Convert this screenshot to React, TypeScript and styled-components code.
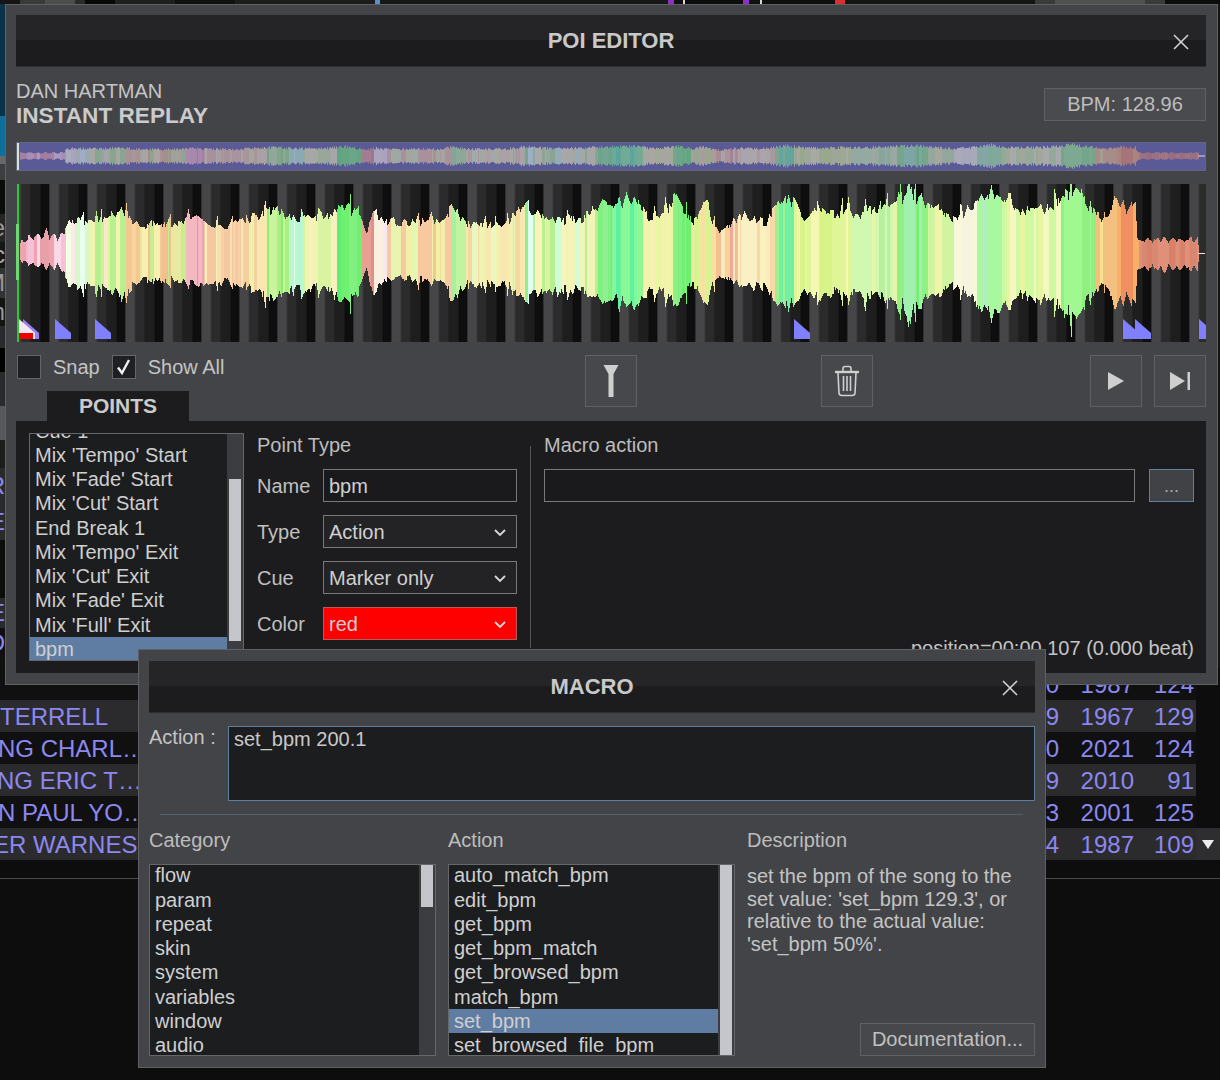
import React from "react";
import styled, { createGlobalStyle } from "styled-components";

const GlobalStyle = createGlobalStyle`
  html, body { margin: 0; padding: 0; background: #0d0d0d; }
  body { font-family: "Liberation Sans", Arial, sans-serif; }
  * { box-sizing: border-box; }
`;

/* ---------- waveform data ---------- */
const ENVELOPE: [number, number, number][] = [
  [18, 4, 4], [22, 16, 12], [34, 22, 16], [50, 22, 16], [60, 18, 17], [70, 38, 38], [85, 36, 38], [100, 38, 38], [124, 47, 47],
  [134, 32, 32], [180, 33, 31], [192, 42, 32], [210, 30, 34], [233, 32, 32], [272, 49, 50], [303, 38, 39], [325, 40, 38],
  [346, 57, 58], [360, 38, 32], [366, 23, 17], [373, 44, 42], [389, 35, 29], [443, 35, 30], [451, 53, 53], [467, 32, 35],
  [505, 32, 35], [525, 56, 53], [545, 38, 42], [583, 38, 42], [599, 53, 53], [612, 55, 53], [633, 63, 63], [649, 38, 42],
  [662, 44, 44], [676, 61, 60], [692, 35, 35], [703, 53, 53], [719, 21, 24], [738, 42, 35], [766, 35, 39], [785, 66, 65],
  [805, 42, 45], [843, 48, 45], [860, 46, 48], [885, 52, 48], [910, 66, 66], [925, 58, 52], [952, 38, 35], [975, 52, 52],
  [991, 71, 73], [1005, 52, 52], [1022, 48, 49], [1050, 52, 52], [1073, 71, 73], [1090, 54, 52], [1104, 35, 32], [1116, 53, 53],
  [1135, 53, 53], [1137, 17, 20], [1197, 16, 18], [1199, 1, 1],
];

const REGIONS: [number, string[]][] = [
  [65, ["#eea4ac", "#f6c0d8", "#fbd8e8", "#e8a0a8", "#f4b8c8"]],
  [85, ["#fbe8f0", "#e8fff0", "#d8f8c8", "#f4ffe0"]],
  [125, ["#c8f4a0", "#dff49c", "#f0f4b0", "#b8f090", "#fae8c8"]],
  [182, ["#f8d4a0", "#f4c890", "#f8f0b0", "#e8e8a0", "#f0c090", "#c8ec90"]],
  [202, ["#f0a0c0", "#e890a8", "#f8c8d8", "#f4b8c0"]],
  [240, ["#f8d0a8", "#f8e0b0", "#f4c8a0", "#f8f0b8"]],
  [262, ["#f8e8b0", "#f0f0a8", "#f4d0a0"]],
  [285, ["#a8f080", "#90ec70", "#c8f4a0"]],
  [300, ["#d8fff8", "#e8fff0", "#b8f8d0"]],
  [335, ["#f0f4b0", "#f8f0c0", "#d8f4a0"]],
  [358, ["#70f070", "#60ee70", "#80f080"]],
  [372, ["#e09088", "#e8a090"]],
  [385, ["#f8e8f0", "#f8d8e0", "#fbf0e0"]],
  [445, ["#f0f0a8", "#f4d8a0", "#e8f4b0", "#f8c8a0", "#e0f8b0", "#f4c890"]],
  [465, ["#a8f0a0", "#b0f4a8", "#c0f4a0"]],
  [520, ["#f0f4b0", "#f8e8b0", "#f4d8a0", "#e8f8c0"]],
  [535, ["#90f090", "#b8f4a8", "#e0fff0"]],
  [595, ["#d0fcd8", "#f0f4b8", "#b8f090", "#d8f4a0", "#f8f4b8"]],
  [610, ["#80f080", "#90f090"]],
  [640, ["#80f8a0", "#60f0a0", "#90f890"]],
  [670, ["#e8f8a0", "#f0f4a8", "#f8f0b0"]],
  [688, ["#70f070", "#80f080", "#90f088"]],
  [712, ["#f4e8a0", "#f8e0a0", "#d8f490"]],
  [735, ["#f0a898", "#f4c090", "#f8d098", "#f8e8c0"]],
  [770, ["#f8ecb8", "#f8f0c8", "#f8d8a8", "#fbf0c0"]],
  [790, ["#a0f090", "#70f0a0", "#c0f4a0"]],
  [850, ["#e0f498", "#f0f4a8", "#d8f488", "#f4f8b0"]],
  [893, ["#e8f4a8", "#b8f0a0", "#d0f8b0"]],
  [925, ["#90f080", "#70f070", "#a0f0b0"]],
  [950, ["#d0f4a0", "#f0f4a8"]],
  [975, ["#f8f8d8", "#f4f4e0"]],
  [1000, ["#90f890", "#a8f8a0", "#b0f0b8"]],
  [1060, ["#e8f4a0", "#f4f8c0", "#d0f8a0"]],
  [1095, ["#90f080", "#a0f890"]],
  [1115, ["#f4c080", "#f8e090"]],
  [1137, ["#f89058", "#f8b068", "#f09060"]],
  [1198, ["#d8806a", "#e09078", "#d88870"]],
];

const hash = (n: number) => {
  const s = Math.sin(n * 127.1 + 11.7) * 43758.5453;
  return s - Math.floor(s);
};

const envelopeAt = (x: number): [number, number] => {
  for (let i = 1; i < ENVELOPE.length; i++) {
    const [x1, t1, b1] = ENVELOPE[i];
    if (x <= x1) {
      const [x0, t0, b0] = ENVELOPE[i - 1];
      const f = (x - x0) / (x1 - x0);
      return [t0 + (t1 - t0) * f, b0 + (b1 - b0) * f];
    }
  }
  return [0, 0];
};

const regionAt = (x: number) => REGIONS.find((r) => x <= r[0]) ?? REGIONS[REGIONS.length - 1];

/* fine jagged outline: short random segments, with a thin tall spike now and then */
const jagged = (seed: number, from: number, to: number) => {
  const out: number[] = new Array(to + 8).fill(1);
  let x = from;
  let v = 0.9;
  let step = 0;
  while (x < to) {
    const w = 1 + Math.floor(hash(seed + step) * 3);
    const r = hash(seed + step + 400);
    const next = r > 0.92 ? 1.24 : 0.72 + r * 0.34;
    for (let i = 0; i < w; i++) out[x + i] = v + (next - v) * (i / w);
    v = next;
    x += w;
    step++;
  }
  return out;
};

const NOISE_SHARED = jagged(1, 18, 1199);
const NOISE_TOP = jagged(2000, 18, 1199);
const NOISE_BOTTOM = jagged(4000, 18, 1199);

type WaveColumn = { x: number; top: number; bottom: number; colour: string; mini: number };

const COLUMNS: WaveColumn[] = [];
{
  let x = 20;
  let band = 0;
  while (x < 1199) {
    const width = 1 + Math.floor(hash(band + 77) * 6);
    const palette = regionAt(x)[1];
    const colour = palette[Math.floor(hash(band + 900) * palette.length)];
    for (let i = 0; i < width && x < 1199; i++, x++) {
      const [t, b] = envelopeAt(x);
      const quiet = x < 65 || x > 1137;
      const bead = quiet ? Math.abs(Math.sin(x / 2.6)) * 0.3 + 0.7 : 1;
      const ft = NOISE_SHARED[x] * 0.75 + NOISE_TOP[x] * 0.25;
      const fb = NOISE_SHARED[x] * 0.75 + NOISE_BOTTOM[x] * 0.25;
      const baseMini = quiet ? 3.8 * bead : 3.5 + Math.max(t, b) * 0.11;
      COLUMNS.push({
        x: x - 16,
        top: Math.round(t * ft * bead),
        bottom: Math.round(b * fb * bead),
        colour,
        mini: baseMini * (0.78 + 0.34 * hash(x + 300)),
      });
    }
    band++;
  }
}

/* ---------- page ---------- */
const Page = styled.div`
  position: relative;
  width: 1220px;
  height: 1080px;
  overflow: hidden;
  background: #0d0d0d;
`;

const TopStrip = styled.div`
  display: flex;
  height: 4px;
  background: #141414;
`;

const TopBit = styled.div<{ $w: number; $c: string }>`
  width: ${(p) => p.$w}px;
  background: ${(p) => p.$c};
  flex: none;
`;

const EdgeArea = styled.div`
  display: flex;
  justify-content: space-between;
  height: 664px;
`;

const EdgeColumn = styled.div<{ $w: number }>`
  display: flex;
  flex-direction: column;
  width: ${(p) => p.$w}px;
  overflow: hidden;
`;

const EdgeBit = styled.div<{ $h: number; $c: string; $ink?: string }>`
  display: flex;
  flex: none;
  justify-content: flex-end;
  align-items: center;
  height: ${(p) => p.$h}px;
  background: ${(p) => p.$c};
  color: ${(p) => p.$ink ?? "#8c88f0"};
  font-size: 24px;
  line-height: 1;
  overflow: hidden;
  span { flex: none; }
`;

const Table = styled.div`
  display: flex;
  flex-direction: column;
  width: 1196px;
`;

const Row = styled.div<{ $alt?: boolean }>`
  display: grid;
  grid-template-columns: 1fr 59px 75px 60px;
  height: 32px;
  padding-right: 2px;
  background: ${(p) => (p.$alt ? "#2b2b2d" : "#101011")};
  color: #8c88f0;
  font-size: 24px;
  line-height: 34px;
`;

const NameCell = styled.div`
  white-space: nowrap;
  overflow: hidden;
`;

const NameText = styled.div<{ $shift: number }>`
  margin-left: ${(p) => p.$shift}px;
`;

const NumCell = styled.div`
  text-align: right;
`;

const ScrollArrow = styled.div`
  position: absolute;
  left: 1196px;
  top: 828px;
  width: 24px;
  height: 32px;
  display: flex;
  align-items: center;
  justify-content: center;
  background: #2e2e30;
`;

const FootLine = styled.div`
  margin-top: 18px;
  height: 1px;
  background: #4a4a4c;
`;

/* ---------- windows ---------- */
const WindowFrame = styled.div<{ $x: number; $y: number; $w: number; $h: number; $pad: string }>`
  position: absolute;
  left: ${(p) => p.$x}px;
  top: ${(p) => p.$y}px;
  width: ${(p) => p.$w}px;
  height: ${(p) => p.$h}px;
  padding: ${(p) => p.$pad};
  display: flex;
  flex-direction: column;
  background: #434448;
  border: 1px solid #606165;
  color: #c6c6c6;
  font-size: 20px;
`;

const TitleBar = styled.div`
  position: relative;
  flex: none;
  height: 52px;
  display: flex;
  align-items: center;
  justify-content: center;
  background: linear-gradient(#252527 50%, #1c1c1e 50%);
  border-bottom: 1px solid #2e2e31;
  font-size: 22px;
  font-weight: 700;
  color: #c9c9c9;
`;

const CloseIcon = styled.svg`
  position: absolute;
  right: 17px;
  top: 19px;
  width: 16px;
  height: 16px;
  stroke: #d2d2d2;
  stroke-width: 1.6;
`;

const InfoRow = styled.div`
  display: flex;
  justify-content: space-between;
  margin-top: 12px;
  height: 51px;
`;

const Track = styled.div`
  display: flex;
  flex-direction: column;
`;

const Artist = styled.div`
  font-size: 20px;
  line-height: 24px;
  color: #c4c4c4;
`;

const Song = styled.div`
  font-size: 22.6px;
  line-height: 26px;
  font-weight: 700;
  color: #cbcbcb;
`;

const BpmBox = styled.div`
  width: 162px;
  height: 33px;
  margin-top: 9px;
  display: flex;
  align-items: center;
  justify-content: center;
  background: #4a4b4f;
  border: 1px solid #5f6064;
  font-size: 20px;
  color: #bdbdbd;
`;

const MiniWave = styled.svg`
  display: block;
  flex: none;
  margin-top: 12px;
  width: 1190px;
  height: 29px;
  background: #5a5a96;
  border: 1px solid #65657f;
`;

const MainWave = styled.svg`
  display: block;
  flex: none;
  margin-top: 13px;
  width: 1190px;
  height: 158px;
`;

const Toolbar = styled.div`
  display: flex;
  flex: none;
  margin-top: 13px;
  height: 66px;
  align-items: flex-start;
`;

const ToolLeft = styled.div`
  display: flex;
  flex-direction: column;
  width: 569px;
  height: 66px;
`;

const CheckRow = styled.div`
  display: flex;
  align-items: center;
  gap: 12px;
  height: 24px;
  padding-left: 1px;
  font-size: 20px;
  color: #c4c4c4;
`;

const CheckBox = styled.div`
  width: 24px;
  height: 24px;
  display: flex;
  align-items: center;
  justify-content: center;
  background: #1f2023;
  border: 1px solid #64656a;
`;

const Tab = styled.div`
  margin: 12px 0 0 31px;
  width: 142px;
  height: 30px;
  display: flex;
  align-items: center;
  justify-content: center;
  background: #1c1c1e;
  font-size: 21px;
  font-weight: 700;
  color: #cbcbcb;
`;

const ToolButton = styled.div<{ $gap?: number }>`
  width: 52px;
  height: 52px;
  display: flex;
  align-items: center;
  justify-content: center;
  margin-left: ${(p) => p.$gap ?? 0}px;
  background: #47484c;
  border: 1px solid #606165;
`;

const ToolSpacer = styled.div`
  flex: 1;
`;

const Panel = styled.div`
  flex: none;
  height: 252px;
  display: flex;
  padding: 12px 12px 12px 13px;
  background: #1c1c1e;
  overflow: hidden;
`;

const ListBox = styled.div<{ $w: number; $h: number }>`
  position: relative;
  flex: none;
  width: ${(p) => p.$w}px;
  height: ${(p) => p.$h}px;
  background: #1c1d1f;
  border: 1px solid #66676b;
  overflow: hidden;
`;

const ListRows = styled.div<{ $offset: number }>`
  margin-top: ${(p) => p.$offset}px;
  padding-right: 16px;
`;

const ListRow = styled.div<{ $on?: boolean }>`
  height: 24.25px;
  line-height: 24.25px;
  padding-left: 5px;
  font-size: 20px;
  white-space: nowrap;
  color: #cfcfcf;
  background: ${(p) => (p.$on ? "#5f7ca3" : "transparent")};
`;

const ScrollTrack = styled.div`
  position: absolute;
  right: 0;
  top: 0;
  bottom: 0;
  width: 16px;
  background: #3c3d40;
`;

const ScrollThumb = styled.div<{ $top: number; $h: number }>`
  position: absolute;
  left: 2px;
  right: 2px;
  top: ${(p) => p.$top}px;
  height: ${(p) => p.$h}px;
  background: #c5c6cc;
`;

const FormColumn = styled.div`
  flex: none;
  width: 260px;
  margin-left: 13px;
  display: flex;
  flex-direction: column;
  gap: 13px;
  color: #c0c0c0;
`;

const Heading = styled.div`
  flex: none;
  height: 24px;
  line-height: 24px;
  font-size: 20px;
  color: #bdbdbd;
`;

const FormHeading = styled(Heading)`
  margin-bottom: -1px;
`;

const FormRow = styled.div`
  display: flex;
  align-items: center;
  justify-content: space-between;
  height: 33px;
`;

const FieldLabel = styled.span`
  padding-top: 2px;
`;

const Field = styled.div<{ $bg?: string; $line?: string; $w?: number }>`
  position: relative;
  flex: none;
  width: ${(p) => (p.$w ? `${p.$w}px` : "194px")};
  height: 33px;
  display: flex;
  align-items: center;
  justify-content: space-between;
  padding: 2px 10px 0 5px;
  background: ${(p) => p.$bg ?? "#1a1a1c"};
  border: 1px solid ${(p) => p.$line ?? "#77787c"};
  color: #d0d0d0;
  font-size: 20px;
`;

const Rule = styled.div`
  flex: none;
  align-self: flex-start;
  width: 1px;
  height: 202px;
  margin: 13px 13px 0 13px;
  background: #55565a;
`;

const MacroColumn = styled.div`
  flex: 1;
  display: flex;
  flex-direction: column;
`;

const MacroHeading = styled(Heading)`
  margin-bottom: 12px;
`;

const MacroInputs = styled.div`
  display: flex;
  justify-content: space-between;
`;

const DotsButton = styled.div`
  width: 45px;
  height: 33px;
  display: flex;
  align-items: flex-end;
  justify-content: center;
  padding-bottom: 4px;
  background: #404246;
  border: 1px solid #5f7fa8;
  color: #aaa;
  font-size: 18px;
  line-height: 22px;
`;

const PositionText = styled.div`
  margin-top: auto;
  text-align: right;
  font-size: 20px;
  line-height: 26px;
  color: #c4c4c4;
`;

/* ---------- macro window ---------- */
const ActionRow = styled.div`
  display: flex;
  justify-content: space-between;
  margin-top: 13px;
`;

const ActionLabel = styled.div`
  height: 24px;
  line-height: 22px;
  color: #c4c4c4;
`;

const ActionArea = styled.div`
  width: 807px;
  height: 75px;
  padding: 0 5px;
  line-height: 24px;
  background: #1c1d1f;
  border: 1px solid #5c7d9f;
  color: #c8c8c8;
`;

const Separator = styled.div`
  height: 1px;
  margin: 13px 12px 0 11px;
  background: #555e68;
`;

const Columns = styled.div`
  display: grid;
  grid-template-columns: 287px 287px 288px;
  column-gap: 12px;
  margin-top: 13px;
`;

const Col = styled.div`
  display: flex;
  flex-direction: column;
  gap: 12px;
  height: 228px;
`;

const DescText = styled.div`
  margin-top: 1px;
  font-size: 20px;
  line-height: 22.6px;
  color: #c4c4c4;
`;

const DocButton = styled.div`
  align-self: flex-end;
  margin-top: auto;
  width: 175px;
  height: 33px;
  display: flex;
  align-items: center;
  justify-content: center;
  background: #47484c;
  border: 1px solid #606165;
  color: #c0c0c0;
`;

/* ---------- pieces ---------- */
const Chevron = () => (
  <svg width="12" height="8" viewBox="0 0 12 8" fill="none" stroke="#d8d8d8" strokeWidth="1.8">
    <polyline points="1,1 6,6 11,1" />
  </svg>
);

const Close = () => (
  <CloseIcon viewBox="0 0 16 16" fill="none">
    <line x1="1" y1="1" x2="15" y2="15" />
    <line x1="15" y1="1" x2="1" y2="15" />
  </CloseIcon>
);

const MiniWaveform = () => (
  <MiniWave viewBox="1 1 1188 27" preserveAspectRatio="none">
    <rect x="1" y="1" width="2" height="27" fill="#d0e8d0" />
    <g opacity="0.5">
      {COLUMNS.map((c) => (
        <rect key={c.x} x={c.x} y={14 - c.mini} width="1" height={c.mini * 2} fill={c.colour} />
      ))}
    </g>
    <rect x="1182" y="13.5" width="7" height="1" fill="#d8d8e8" />
  </MiniWave>
);

const Marker = ({ x }: { x: number }) => (
  <polygon points={`${x},135 ${x + 16},149 ${x + 16},155 ${x},155`} fill="#8080ff" />
);

const MainWaveform = () => (
  <MainWave viewBox="0 0 1190 158">
    <defs>
      <pattern id="beats" x="-4.6" y="0" width="38" height="158" patternUnits="userSpaceOnUse">
        <rect x="0" width="9.5" height="158" fill="#464648" />
        <rect x="9.5" width="9.5" height="158" fill="#2b2b2b" />
        <rect x="19" width="9.5" height="158" fill="#1e1e1e" />
        <rect x="28.5" width="9.5" height="158" fill="#0e0e0e" />
      </pattern>
    </defs>
    <rect x="2" width="1188" height="158" fill="url(#beats)" />
    {COLUMNS.map((c) => (
      <rect key={c.x} x={c.x} y={69 - c.top} width="1" height={c.top + c.bottom} fill={c.colour} />
    ))}
    <rect x="1182" y="69" width="7" height="1" fill="#f0e8e0" />
    <rect x="1" y="0" width="2" height="158" fill="#30c830" />
    <rect x="0" y="40" width="3" height="56" fill="#70d870" />
    <polygon points="7,135 23,149 23,155 7,155" fill="#9a80f0" />
    <polygon points="3,135 19,149 19,155 3,155" fill="#f8e8f0" />
    <rect x="3" y="149" width="14" height="6" fill="#ee0000" />
    <Marker x={39} />
    <Marker x={79} />
    <Marker x={778} />
    <Marker x={1107} />
    <Marker x={1119} />
    <Marker x={1183} />
  </MainWave>
);

const Check = () => (
  <svg width="18" height="18" viewBox="0 0 18 18" fill="none" stroke="#f0f0f0" strokeWidth="2.4">
    <polyline points="3,9.5 7,15 14,2" />
  </svg>
);

const PinIcon = () => (
  <svg width="16" height="33" viewBox="0 0 16 33" fill="#cfcfcf">
    <polygon points="0.5,0 15.5,0 10.5,9 10.5,32 5.5,32 5.5,9" />
  </svg>
);

const TrashIcon = () => (
  <svg width="26" height="32" viewBox="0 0 26 32" fill="none" stroke="#cfcfcf" strokeWidth="1.6">
    <path d="M1 7 H25" strokeWidth="2.4" />
    <path d="M9 6 V3.5 Q9 1.5 11 1.5 H15 Q17 1.5 17 3.5 V6" />
    <path d="M4 8 L5 28 Q5.2 30.5 8 30.5 H18 Q20.8 30.5 21 28 L22 8" />
    <path d="M9.5 11 V26 M13 11 V26 M16.5 11 V26" />
  </svg>
);

const PlayIcon = () => (
  <svg width="16" height="18" viewBox="0 0 16 18" fill="#cfcfcf">
    <polygon points="0,0 16,9 0,18" />
  </svg>
);

const NextIcon = () => (
  <svg width="21" height="18" viewBox="0 0 21 18" fill="#cfcfcf">
    <polygon points="0,0 15,9 0,18" />
    <rect x="17.5" y="0" width="2.5" height="18" />
  </svg>
);

const DownArrow = () => (
  <svg width="12" height="9" viewBox="0 0 12 9" fill="#ececec">
    <polygon points="0,0 12,0 6,9" />
  </svg>
);

const TOP_BITS: [number, string][] = [
  [20, "#151515"], [25, "#3a3a3a"], [30, "#4c4c4c"], [10, "#2a2a2a"], [30, "#080808"], [60, "#1f1f1f"], [60, "#101010"],
  [140, "#1c1c1c"], [5, "#5f8ed0"], [288, "#171717"], [6, "#9030c0"], [9, "#0e0e0e"], [2, "#d8d8d8"], [58, "#0c0c0c"],
  [6, "#9030c0"], [11, "#101010"], [2, "#d8d8d8"], [73, "#0e0e0e"], [10, "#d83030"], [190, "#141414"],
  [20, "#3a3a3a"], [90, "#505050"], [20, "#3a3a3a"], [60, "#0c0c0c"],
];

const LEFT_BITS: { h: number; c: string; t?: string; ink?: string }[] = [
  { h: 112, c: "#0a3347" }, { h: 40, c: "#0f6f9a" }, { h: 8, c: "#68686a" }, { h: 16, c: "#3e3e40" }, { h: 34, c: "#0b0b0b" },
  { h: 28, c: "#252527", t: "e", ink: "#999" }, { h: 26, c: "#161616", t: "c", ink: "#aaa" }, { h: 30, c: "#333335", t: "M", ink: "#999" },
  { h: 28, c: "#141414", t: "m", ink: "#999" }, { h: 22, c: "#2a2a2c" }, { h: 24, c: "#000" }, { h: 34, c: "#2a2a2c" },
  { h: 34, c: "#58585a" }, { h: 28, c: "#1c1c1c" }, { h: 36, c: "#2a2a2c", t: "R" }, { h: 36, c: "#2a2a2c", t: "E" },
  { h: 58, c: "#0c0c0c" }, { h: 30, c: "#2a2a2c", t: "E" }, { h: 30, c: "#101012", t: "D" }, { h: 10, c: "#111" },
];

const POINTS = ["Cue 1", "Mix 'Tempo' Start", "Mix 'Fade' Start", "Mix 'Cut' Start", "End Break 1", "Mix 'Tempo' Exit", "Mix 'Cut' Exit", "Mix 'Fade' Exit", "Mix 'Full' Exit", "bpm"];
const CATEGORIES = ["flow", "param", "repeat", "skin", "system", "variables", "window", "audio"];
const ACTIONS = ["auto_match_bpm", "edit_bpm", "get_bpm", "get_bpm_match", "get_browsed_bpm", "match_bpm", "set_bpm", "set_browsed_file_bpm"];
const TRACKS: { name: string; shift: number; len: string; year: string; bpm: string; alt: boolean }[] = [
  { name: "", shift: 0, len: "0", year: "1987", bpm: "124", alt: false },
  { name: "TERRELL", shift: 0, len: "9", year: "1967", bpm: "129", alt: true },
  { name: "NG CHARL…", shift: -2, len: "0", year: "2021", bpm: "124", alt: false },
  { name: "NG ERIC T…", shift: -3, len: "9", year: "2010", bpm: "91", alt: true },
  { name: "N PAUL YO…", shift: -2, len: "3", year: "2001", bpm: "125", alt: false },
  { name: "ER WARNES", shift: -7, len: "4", year: "1987", bpm: "109", alt: true },
];

export default function App() {
  return (
    <Page>
      <GlobalStyle />
      <TopStrip>
        {TOP_BITS.map(([w, c], i) => (
          <TopBit key={i} $w={w} $c={c} />
        ))}
      </TopStrip>
      <EdgeArea>
        <EdgeColumn $w={5}>
          {LEFT_BITS.map((b, i) => (
            <EdgeBit key={i} $h={b.h} $c={b.c} $ink={b.ink}>
              {b.t && <span>{b.t}</span>}
            </EdgeBit>
          ))}
        </EdgeColumn>
        <EdgeColumn $w={2}>
          <EdgeBit $h={664} $c="#141416" />
        </EdgeColumn>
      </EdgeArea>
      <Table>
        {TRACKS.map((t) => (
          <Row key={t.year + t.bpm} $alt={t.alt}>
            <NameCell>
              <NameText $shift={t.shift}>{t.name}</NameText>
            </NameCell>
            <NumCell>{t.len}</NumCell>
            <NumCell>{t.year}</NumCell>
            <NumCell>{t.bpm}</NumCell>
          </Row>
        ))}
      </Table>
      <FootLine />
      <ScrollArrow>
        <DownArrow />
      </ScrollArrow>

      <WindowFrame $x={5} $y={4} $w={1213} $h={681} $pad="10px 11px 10px 10px">
        <TitleBar>
          POI EDITOR
          <Close />
        </TitleBar>
        <InfoRow>
          <Track>
            <Artist>DAN HARTMAN</Artist>
            <Song>INSTANT REPLAY</Song>
          </Track>
          <BpmBox>BPM: 128.96</BpmBox>
        </InfoRow>
        <MiniWaveform />
        <MainWaveform />
        <Toolbar>
          <ToolLeft>
            <CheckRow>
              <CheckBox />
              <span>Snap</span>
              <CheckBox>
                <Check />
              </CheckBox>
              <span>Show All</span>
            </CheckRow>
            <Tab>POINTS</Tab>
          </ToolLeft>
          <ToolButton>
            <PinIcon />
          </ToolButton>
          <ToolButton $gap={184}>
            <TrashIcon />
          </ToolButton>
          <ToolSpacer />
          <ToolButton>
            <PlayIcon />
          </ToolButton>
          <ToolButton $gap={12}>
            <NextIcon />
          </ToolButton>
        </Toolbar>
        <Panel>
          <ListBox $w={215} $h={228}>
            <ListRows $offset={-15.4}>
              {POINTS.map((p) => (
                <ListRow key={p} $on={p === "bpm"}>
                  {p}
                </ListRow>
              ))}
            </ListRows>
            <ScrollTrack>
              <ScrollThumb $top={45} $h={162} />
            </ScrollTrack>
          </ListBox>
          <FormColumn>
            <FormHeading>Point Type</FormHeading>
            <FormRow>
              <FieldLabel>Name</FieldLabel>
              <Field>bpm</Field>
            </FormRow>
            <FormRow>
              <FieldLabel>Type</FieldLabel>
              <Field $bg="#232325">
                Action
                <Chevron />
              </Field>
            </FormRow>
            <FormRow>
              <FieldLabel>Cue</FieldLabel>
              <Field $bg="#232325">
                Marker only
                <Chevron />
              </Field>
            </FormRow>
            <FormRow>
              <FieldLabel>Color</FieldLabel>
              <Field $bg="#ff0000" $line="#b85a5a">
                red
                <Chevron />
              </Field>
            </FormRow>
          </FormColumn>
          <Rule />
          <MacroColumn>
            <MacroHeading>Macro action</MacroHeading>
            <MacroInputs>
              <Field $w={591} />
              <DotsButton>...</DotsButton>
            </MacroInputs>
            <PositionText>position=00:00.107 (0.000 beat)</PositionText>
          </MacroColumn>
        </Panel>
      </WindowFrame>

      <WindowFrame $x={138} $y={649} $w={908} $h={419} $pad="11px 10px 10px 10px">
        <TitleBar>
          MACRO
          <Close />
        </TitleBar>
        <ActionRow>
          <ActionLabel>Action :</ActionLabel>
          <ActionArea>set_bpm 200.1</ActionArea>
        </ActionRow>
        <Separator />
        <Columns>
          <Col>
            <Heading>Category</Heading>
            <ListBox $w={287} $h={192}>
              <ListRows $offset={-1.7}>
                {CATEGORIES.map((c) => (
                  <ListRow key={c}>{c}</ListRow>
                ))}
              </ListRows>
              <ScrollTrack>
                <ScrollThumb $top={0} $h={42} />
              </ScrollTrack>
            </ListBox>
          </Col>
          <Col>
            <Heading>Action</Heading>
            <ListBox $w={287} $h={192}>
              <ListRows $offset={-1.7}>
                {ACTIONS.map((a) => (
                  <ListRow key={a} $on={a === "set_bpm"}>
                    {a}
                  </ListRow>
                ))}
              </ListRows>
              <ScrollTrack>
                <ScrollThumb $top={0} $h={190} />
              </ScrollTrack>
            </ListBox>
          </Col>
          <Col>
            <Heading>Description</Heading>
            <DescText>
              set the bpm of the song to the
              <br />
              set value: 'set_bpm 129.3', or
              <br />
              relative to the actual value:
              <br />
              'set_bpm 50%'.
            </DescText>
            <DocButton>Documentation...</DocButton>
          </Col>
        </Columns>
      </WindowFrame>
    </Page>
  );
}
